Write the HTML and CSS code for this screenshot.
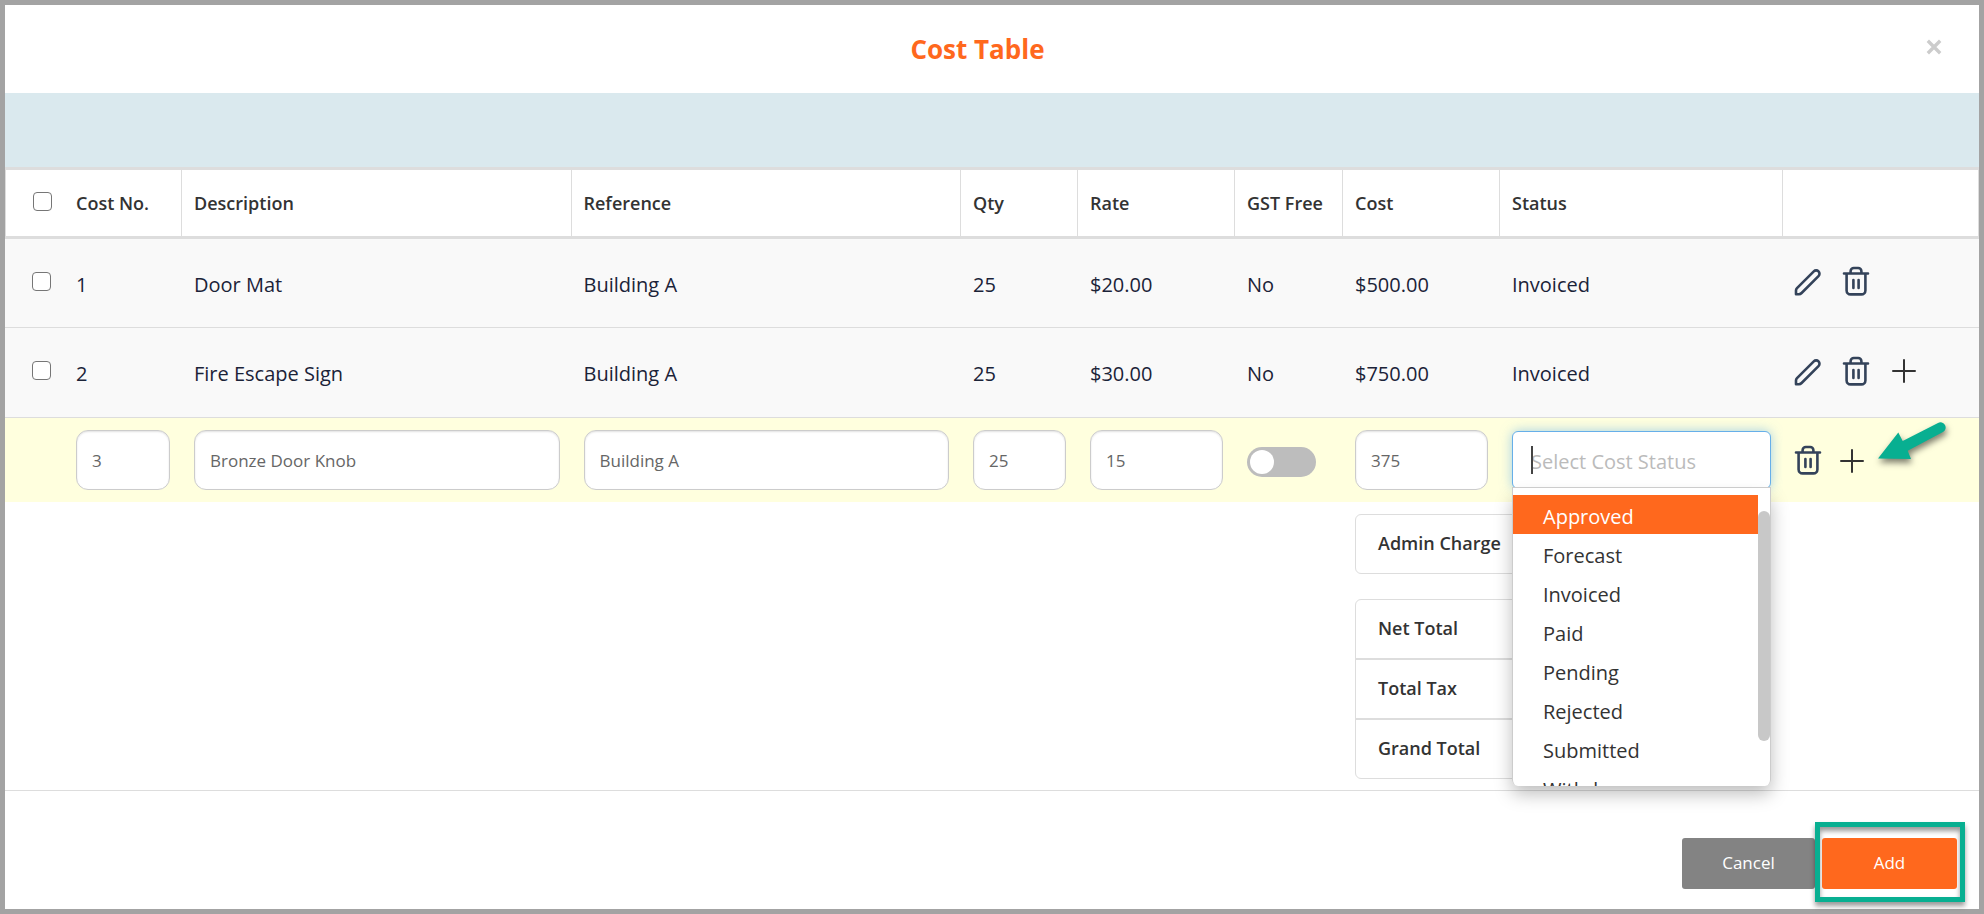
FILE: index.html
```html
<!DOCTYPE html>
<html lang="en">
<head>
<meta charset="utf-8">
<title>Cost Table</title>
<link rel="stylesheet" href="styles.css">
</head>
<body>
<svg class="sprite" aria-hidden="true">
  <symbol id="pencil" viewBox="0 0 28 28">
    <path d="M2 26.300V22.600Q2 21.200 3 20.200L19.800 3.400a3.300 3.300 0 0 1 4.700 0 3.300 3.300 0 0 1 0 4.700L7.600 25Q6.400 26.200 5 26.200Z"/>
  </symbol>
  <symbol id="trash" viewBox="0 0 28 30">
    <path d="M2 7.500h24M8.600 7V5.200a3.200 3.200 0 0 1 3.200-3.200h4.400a3.200 3.200 0 0 1 3.200 3.200V7M4.600 8v16.400a4 4 0 0 0 4 4h10.800a4 4 0 0 0 4-4V8M11.400 14v8M16.600 14v8"/>
  </symbol>
  <symbol id="plus" viewBox="0 0 28 28">
    <path d="M14 3v22M3 14h22"/>
  </symbol>
</svg>
<main class="modal">
  <header class="modal-header">
    <h1 class="title">Cost Table</h1>
    <button class="close" type="button" aria-label="Close"><svg viewBox="0 0 16 16"><path d="M2.500 2.500l11 11M13.500 2.500l-11 11"/></svg></button>
  </header>
  <div class="toolbar"></div>
  <table class="costs">
    <colgroup>
      <col class="c-check"><col class="c-no"><col><col><col class="c-qty"><col class="c-rate"><col class="c-gst"><col class="c-cost"><col class="c-status"><col class="c-actions">
    </colgroup>
    <thead>
      <tr>
        <th class="check first"><input class="box" type="checkbox" aria-label="Select all"></th>
        <th>Cost No.</th><th>Description</th><th>Reference</th><th>Qty</th><th>Rate</th><th>GST Free</th><th>Cost</th><th>Status</th><th></th>
      </tr>
    </thead>
    <tbody>
      <tr class="row">
        <td class="check"><input class="box" type="checkbox" aria-label="Select cost 1"></td>
        <td>1</td><td>Door Mat</td><td>Building A</td><td>25</td><td>$20.00</td><td>No</td><td>$500.00</td><td>Invoiced</td>
        <td class="tools"><div class="actions">
          <button class="icon" type="button" aria-label="Edit"><svg><use href="#pencil"/></svg></button>
          <button class="icon" type="button" aria-label="Delete"><svg class="bin"><use href="#trash"/></svg></button>
        </div></td>
      </tr>
      <tr class="row last">
        <td class="check"><input class="box" type="checkbox" aria-label="Select cost 2"></td>
        <td>2</td><td>Fire Escape Sign</td><td>Building A</td><td>25</td><td>$30.00</td><td>No</td><td>$750.00</td><td>Invoiced</td>
        <td class="tools"><div class="actions">
          <button class="icon" type="button" aria-label="Edit"><svg><use href="#pencil"/></svg></button>
          <button class="icon" type="button" aria-label="Delete"><svg class="bin"><use href="#trash"/></svg></button>
          <button class="icon" type="button" aria-label="Add row"><svg class="thin"><use href="#plus"/></svg></button>
        </div></td>
      </tr>
      <tr class="edit">
        <td></td>
        <td><input class="field" type="text" aria-label="Cost No." value="3"></td>
        <td><input class="field" type="text" aria-label="Description" value="Bronze Door Knob"></td>
        <td><input class="field" type="text" aria-label="Reference" value="Building A"></td>
        <td><input class="field" type="text" aria-label="Qty" value="25"></td>
        <td><input class="field" type="text" aria-label="Rate" value="15"></td>
        <td><input class="toggle" type="checkbox" role="switch" aria-label="GST Free"></td>
        <td><input class="field" type="text" aria-label="Cost" value="375"></td>
        <td class="status">
          <div class="combo">
            <input class="select" type="text" role="combobox" aria-expanded="true" aria-controls="statuses" aria-label="Status" placeholder="Select Cost Status">
            <span class="caret"></span>
            <div class="menu">
              <ul class="options" id="statuses" role="listbox">
                <li class="option active" role="option" aria-selected="true">Approved</li>
                <li class="option" role="option">Forecast</li>
                <li class="option" role="option">Invoiced</li>
                <li class="option" role="option">Paid</li>
                <li class="option" role="option">Pending</li>
                <li class="option" role="option">Rejected</li>
                <li class="option" role="option">Submitted</li>
                <li class="option" role="option">Withdrawn</li>
              </ul>
              <span class="thumb"></span>
            </div>
          </div>
        </td>
        <td class="tools"><div class="actions tight">
          <button class="icon" type="button" aria-label="Delete"><svg class="bin"><use href="#trash"/></svg></button>
          <button class="icon" type="button" aria-label="Add row"><svg class="thin"><use href="#plus"/></svg></button>
        </div>
        <svg class="pointer" viewBox="0 0 80 50" aria-hidden="true"><path d="M4 40.500 24.300 14.500 28.700 23 64 5A5 5 0 0 1 69 14L33.700 32.800 37 41Z"/></svg>
        </td>
      </tr>
    </tbody>
  </table>
  <section class="totals">
    <dl class="panel"><dt>Admin Charge</dt></dl>
    <dl class="panel"><dt>Net Total</dt><dt>Total Tax</dt><dt>Grand Total</dt></dl>
  </section>
  <footer class="modal-footer">
    <button class="btn cancel" type="button">Cancel</button>
    <div class="marked"><button class="btn add" type="button">Add</button></div>
  </footer>
</main>
</body>
</html>
```
FILE: styles.css
```css
* { box-sizing: border-box; }

body {
  margin: 0;
  padding: 5px;
  background: #a3a3a3;
  color: #333;
  font-family: "Open Sans", "Noto Sans", sans-serif;
  font-size: 20px;
}

button, input { font: inherit; }
button { padding: 0; border: 0; background: none; cursor: pointer; }

.sprite { position: absolute; width: 0; height: 0; }

.modal {
  display: flex;
  flex-direction: column;
  min-height: calc(100vh - 10px);
  background: #fff;
}

.modal-header {
  display: flex;
  align-items: center;
  height: 88px;
  padding: 0 36px 0 25px;
}
.title {
  flex: 1;
  margin: 0;
  color: #ff681d;
  font-size: 26px;
  font-weight: 700;
  line-height: 36px;
  text-align: center;
}
.close { width: 18px; height: 24px; margin-bottom: 8px; }
.close svg {
  display: block;
  width: 18px;
  height: 18px;
  margin-top: 4px;
  fill: none;
  stroke: #ccc;
  stroke-width: 3;
}

.toolbar { height: 74px; background: #dae9ee; }

.costs {
  width: 100%;
  border-collapse: separate;
  border-spacing: 0;
  table-layout: fixed;
}
.c-check { width: 59px; }
.c-no { width: 118px; }
.c-qty { width: 117px; }
.c-rate, .c-cost { width: 157px; }
.c-gst { width: 108px; }
.c-status { width: 283px; }
.c-actions { width: 196px; }

th {
  height: 72px;
  padding: 0 12px;
  border: solid #ddd;
  border-width: 3px 1px 3px 0;
  font-size: 18px;
  font-weight: 600;
  text-align: left;
  white-space: nowrap;
}
.first { border-width: 3px 0 3px 1px; }

td { padding: 0 12px; text-align: left; }
.row td {
  height: 89px;
  padding-top: 2px;
  border-bottom: 1px solid #ddd;
  background: #f9f9f9;
  color: #1b2338;
}
.last td { height: 90px; }
.edit td { height: 84px; background: #ffffde; }

.check { padding: 0 0 3px 27px; line-height: 0; }
.row .check { padding: 0 0 4px 27px; }
.box {
  appearance: none;
  width: 19px;
  height: 19px;
  margin: 0;
  border: 1px solid #767676;
  border-radius: 4px;
  background: #fff;
  vertical-align: middle;
}

.field {
  display: block;
  width: 100%;
  height: 60px;
  padding: 0 15px;
  border: 1px solid #ccc;
  border-radius: 12px;
  background: #fff;
  box-shadow: inset 0 1px 2px rgba(0, 0, 0, .12);
  color: #666;
  font-size: 17px;
}

.toggle {
  appearance: none;
  display: block;
  width: 69px;
  height: 30px;
  margin: 4px 0 0;
  border-radius: 15px;
  background: #bdbdbd;
}
.toggle::before {
  content: "";
  display: block;
  width: 24px;
  height: 24px;
  margin: 3px;
  border-radius: 50%;
  background: #fff;
}

.status { padding-right: 8px; }
.combo { position: relative; }
.select {
  display: block;
  width: 259px;
  height: 58px;
  padding: 2px 18px 0;
  border: 1px solid #66afe9;
  border-radius: 6px;
  outline: 0;
  background: #fff;
  box-shadow: 0 0 12px rgba(102, 175, 233, .6);
}
.select::placeholder { color: #bbb; opacity: 1; }
.caret {
  position: absolute;
  top: 15px;
  left: 19px;
  width: 2px;
  height: 28px;
  background: #444;
}
.menu {
  position: absolute;
  z-index: 2;
  top: 56px;
  left: 0;
  width: 259px;
  height: 299px;
  padding-top: 7px;
  overflow: hidden;
  border: solid #ccc;
  border-width: 1px 1px 0;
  border-radius: 0 0 6px 6px;
  background: #fff;
}
.combo::after {
  content: "";
  position: absolute;
  z-index: 1;
  top: 60px;
  left: 0;
  width: 259px;
  height: 295px;
  border-radius: 6px;
  box-shadow: 0 8px 18px rgba(0, 0, 0, .26);
}
.options { margin: 0; padding: 0 12px 0 0; list-style: none; }
.option { height: 39px; padding: 4px 30px 0; line-height: 36px; }
.active { background: #ff681d; color: #fff; }
.thumb {
  position: absolute;
  top: 23px;
  right: 0;
  width: 12px;
  height: 230px;
  border-radius: 6px;
  background: #c8c8c8;
}

.row .tools { padding: 0 0 4px 11px; }
.tools { position: relative; padding: 0 0 0 11px; }
.actions { display: flex; align-items: center; gap: 20px; }
.tight { gap: 16px; }
.icon { display: block; width: 28px; height: 30px; }
.icon svg {
  display: block;
  width: 28px;
  height: 28px;
  margin-top: 2px;
  fill: none;
  stroke: #34435a;
  stroke-width: 2.6;
  stroke-linecap: round;
  stroke-linejoin: round;
}
.icon .bin { height: 30px; margin-top: 0; }
.icon .thin { margin-top: 1px; stroke: #333; stroke-width: 2; }
.pointer {
  position: absolute;
  top: 0;
  left: 91px;
  width: 80px;
  height: 50px;
  fill: #08af91;
  filter: drop-shadow(1px 4px 3px rgba(0, 0, 0, .5));
}

.totals {
  display: flex;
  flex-direction: column;
  align-items: flex-end;
  gap: 25px;
  padding: 12px 209px 11px 0;
  border-bottom: 1px solid #ddd;
}
.panel {
  width: 415px;
  margin: 0;
  border: 1px solid #ddd;
  border-radius: 6px;
  font-size: 18px;
  font-weight: 600;
}
.panel dt { height: 58px; padding: 0 22px; line-height: 57px; }
.panel dt + dt { height: 60px; border-top: 2px solid #ddd; }

.modal-footer {
  display: flex;
  flex: 1;
  align-items: flex-start;
  justify-content: flex-end;
  padding: 31px 14px 7px;
}
.btn {
  width: 135px;
  height: 51px;
  padding-bottom: 2px;
  border-radius: 3px;
  color: #fff;
  font-size: 17px;
}
.cancel { width: 133px; margin-top: 16px; background: #838383; }
.marked {
  width: 150px;
  height: 80px;
  padding: 11px 2px;
  border: 5px solid #08af91;
  box-shadow: 0 4px 5px rgba(0, 0, 0, .4), inset 0 4px 5px rgba(0, 0, 0, .4);
}
.add { background: #ff681d; }
```
